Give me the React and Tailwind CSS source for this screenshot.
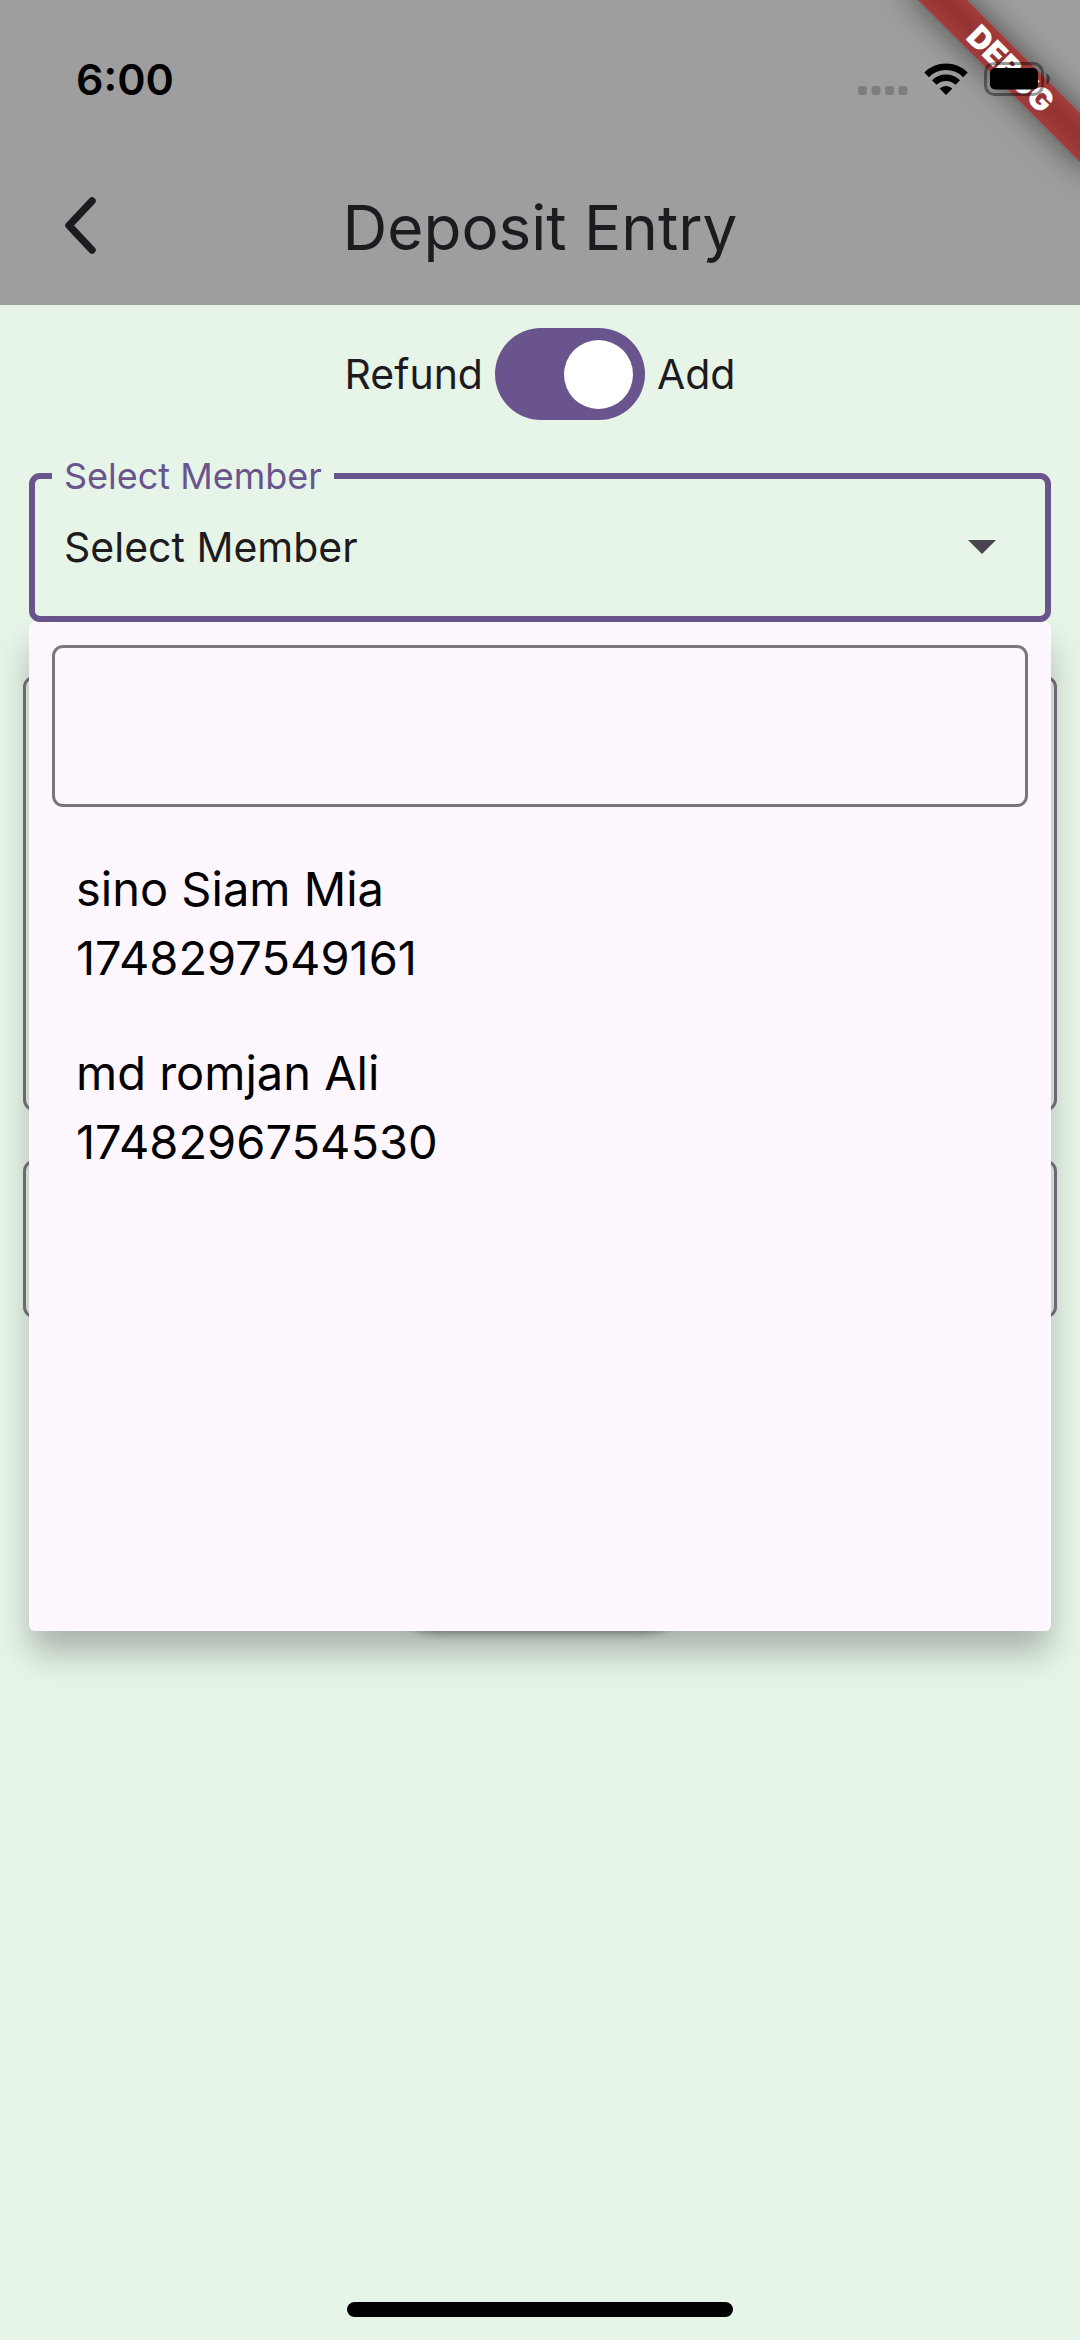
import React, { useState } from "react";

const members = [
  { name: "sino Siam Mia", id: "1748297549161" },
  { name: "md romjan Ali", id: "1748296754530" },
];

function SignalDots() {
  return (
    <svg width="50" height="32" viewBox="0 0 50 32" fill="#7d7d7d" aria-hidden="true">
      <rect x="0" y="23" width="9" height="9" rx="3" />
      <rect x="13.5" y="23" width="9" height="9" rx="3" />
      <rect x="27" y="23" width="9" height="9" rx="3" />
      <rect x="40.5" y="23" width="9" height="9" rx="3" />
    </svg>
  );
}

function Wifi() {
  return (
    <svg width="44" height="32" viewBox="0 0 44 32" aria-hidden="true">
      <g fill="none" stroke="#000">
        <path d="M2.6 11.8 A27.5 27.5 0 0 1 41.4 11.8" strokeWidth="6.6" />
        <path d="M10.2 19.6 A16.7 16.7 0 0 1 33.8 19.6" strokeWidth="6.4" />
      </g>
      <path d="M22 32 L15.6 25.6 A9.2 9.2 0 0 1 28.4 25.6 Z" fill="#000" />
    </svg>
  );
}

function Battery() {
  return (
    <svg width="68" height="34" viewBox="0 0 68 34" aria-hidden="true">
      <rect x="1.5" y="1.5" width="57" height="31" rx="9" fill="none" stroke="#000" strokeOpacity="0.4" strokeWidth="3" />
      <rect x="6" y="6" width="48" height="21.5" rx="5" fill="#000" />
      <path d="M62.5 11.5 C67 13.5 67 20.5 62.5 22.5 Z" fill="#000" fillOpacity="0.5" />
    </svg>
  );
}

export default function App() {
  const [adding, setAdding] = useState(true);
  const [open, setOpen] = useState(true);
  const [selected, setSelected] = useState("Select Member");

  return (
    <div className="flex min-h-screen flex-col bg-[#e7f5e8] text-[#1d1b20] font-['Inter','Liberation_Sans',sans-serif]">
      <header className="relative overflow-hidden bg-[#9e9e9e]">
        <div className="absolute top-[51px] -right-[61px] flex h-[35px] w-[260px] rotate-45 items-center justify-center bg-linear-to-b from-[#a13c3c] via-[#943333] to-[#a13c3c] text-[31px] leading-none font-black text-white shadow-[0_0_32px_rgba(0,0,0,0.55)]">
          DEBUG
        </div>
        <div className="relative flex h-[150px] items-center justify-between pt-3 pr-7 pl-[76px]">
          <time className="pb-1 text-[43px] leading-none font-semibold text-black">6:00</time>
          <div className="flex items-center gap-4 pb-1">
            <SignalDots />
            <Wifi />
            <Battery />
          </div>
        </div>
        <div className="grid h-[155px] grid-cols-[1fr_auto_1fr] items-center px-[60px]">
          <button type="button" aria-label="Back" className="flex h-20 w-14 items-center">
            <svg width="42" height="64" viewBox="0 0 42 64" fill="none" stroke="#1d1b20" strokeWidth="7.5" strokeLinecap="round" strokeLinejoin="round" aria-hidden="true">
              <path d="M32 5 L9 29.500 L32 54" />
            </svg>
          </button>
          <h1 className="text-[62px] leading-none">Deposit Entry</h1>
        </div>
      </header>

      <main className="flex flex-col">
        <div className="mt-[23px] flex items-center justify-center gap-3 text-[41px] leading-none">
          <span>Refund</span>
          <button
            type="button"
            role="switch"
            aria-checked={adding}
            aria-label="Add deposit"
            onClick={() => setAdding(!adding)}
            className={
              "flex h-[92px] w-[150px] items-center rounded-full bg-[#6a548d] px-3 " +
              (adding ? "justify-end" : "justify-start")
            }
          >
            <span className="size-[69px] rounded-full bg-white" />
          </button>
          <span>Add</span>
        </div>

        <div className="relative z-10 mx-[29px] mt-[35px]">
          <fieldset className="rounded-[11px] border-6 border-[#6a548d]">
            <legend className="ml-[17px] px-3 text-[36px] leading-[42px] text-[#6a548d]">Select Member</legend>
            <button
              type="button"
              aria-haspopup="listbox"
              aria-expanded={open}
              onClick={() => setOpen(!open)}
              className="flex w-full items-center justify-between pt-5 pr-[49px] pb-[39px] pl-[29px] text-left text-[41px] leading-[60px]"
            >
              <span>{selected}</span>
              <svg width="28" height="14" viewBox="0 0 28 14" fill="#49454f" aria-hidden="true">
                <path d="M0 0 H28 L14 14 Z" />
              </svg>
            </button>
          </fieldset>

          {open && (
            <div className="absolute inset-x-0 top-full flex h-[1009px] flex-col rounded-md bg-[#fef7ff] px-[23px] pt-[23px] shadow-[0_23px_34px_-2px_rgba(0,0,0,0.28)]">
              <input
                type="text"
                aria-label="Search member"
                className="h-[162px] w-full rounded-[11px] border-3 border-[#7a757f] bg-transparent px-6 text-[47px] outline-none"
              />
              <ul role="listbox" aria-label="Members" className="pt-6 text-[47px] leading-[69px] text-black">
                {members.map((m) => (
                  <li key={m.id} role="option" aria-selected={selected === m.name}>
                    <button
                      type="button"
                      onClick={() => {
                        setSelected(m.name);
                        setOpen(false);
                      }}
                      className="flex w-full flex-col px-6 py-[23px] text-left"
                    >
                      <span>{m.name}</span>
                      <span>{m.id}</span>
                    </button>
                  </li>
                ))}
              </ul>
            </div>
          )}
        </div>

        <form className="mx-[23px] mt-[54px] flex flex-col" onSubmit={(e) => e.preventDefault()}>
          <textarea aria-label="Note" className="h-[435px] w-full resize-none rounded-[11px] border-3 border-[#79747e] p-6 text-[41px]" />
          <input type="text" aria-label="Amount" className="mt-[49px] h-[158px] w-full rounded-[11px] border-3 border-[#79747e] px-6 text-[41px]" />
          <button type="submit" aria-label="Save" className="mt-[194px] h-[115px] w-[320px] self-center rounded-full bg-[#f7f2fa] shadow-[0_6px_10px_rgba(0,0,0,0.4)]" />
        </form>
      </main>

      <footer className="mt-auto flex justify-center pb-[23px]">
        <div className="h-[15px] w-[386px] rounded-full bg-black" />
      </footer>
    </div>
  );
}
